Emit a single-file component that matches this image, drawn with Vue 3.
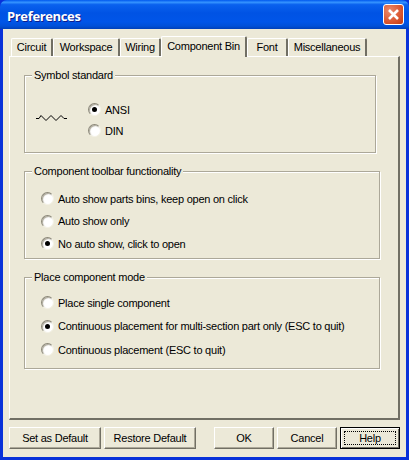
<script setup>
const tabs = [
  { label: 'Circuit', w: 42 },
  { label: 'Workspace', w: 67 },
  { label: 'Wiring', w: 41 },
  { label: 'Component Bin', w: 86, active: true },
  { label: 'Font', w: 41 },
  { label: 'Miscellaneous', w: 79 }
]
const toolbar = [
  { label: 'Auto show parts bins, keep open on click' },
  { label: 'Auto show only' },
  { label: 'No auto show, click to open', on: true }
]
const place = [
  { label: 'Place single component' },
  { label: 'Continuous placement for multi-section part only (ESC to quit)', on: true },
  { label: 'Continuous placement (ESC to quit)' }
]
</script>

<template>
  <div class="window">
    <div class="titlebar">
      <span class="title">Preferences</span>
      <button class="close" aria-label="Close">
        <svg width="21" height="21" viewBox="0 0 21 21">
          <path d="M6 6 L15 15 M15 6 L6 15" stroke="#fff" stroke-width="2.6" fill="none" />
        </svg>
      </button>
    </div>
    <div class="client">
      <div class="tabs">
        <div
          v-for="t in tabs"
          :key="t.label"
          class="tab"
          :class="{ active: t.active }"
          :style="{ width: t.w + 'px' }"
        >{{ t.label }}</div>
      </div>
      <div class="page">
        <section class="group g1">
          <span class="legend">Symbol standard</span>
          <div class="symbol-row">
            <svg class="resistor" width="31" height="8" viewBox="0 0 31 8">
              <path d="M0 5.5H3L5 2.5L10 7.5L15 2.5L20 7.5L25 2.5L28 5.5H31" stroke="#000" stroke-width="1" fill="none" />
            </svg>
            <div class="radios r1">
              <label class="radio on"><i class="dot"></i>ANSI</label>
              <label class="radio"><i class="dot"></i>DIN</label>
            </div>
          </div>
        </section>
        <section class="group g2">
          <span class="legend">Component toolbar functionality</span>
          <div class="radios">
            <label v-for="o in toolbar" :key="o.label" class="radio" :class="{ on: o.on }"><i class="dot"></i>{{ o.label }}</label>
          </div>
        </section>
        <section class="group g2 g3">
          <span class="legend">Place component mode</span>
          <div class="radios">
            <label v-for="o in place" :key="o.label" class="radio" :class="{ on: o.on }"><i class="dot"></i>{{ o.label }}</label>
          </div>
        </section>
      </div>
      <div class="buttons">
        <button class="btn wide">Set as Default</button>
        <button class="btn wide">Restore Default</button>
        <button class="btn push">OK</button>
        <button class="btn">Cancel</button>
        <button class="btn default"><span>Help</span></button>
      </div>
    </div>
  </div>
</template>

<style scoped>
.window {
  width: 409px;
  height: 460px;
  display: flex;
  flex-direction: column;
  background: #0831d9;
  font-family: "Liberation Sans", Arial, sans-serif;
  font-size: 11px;
  letter-spacing: -0.24px;
  color: #000;
  overflow: hidden;
}
.titlebar {
  height: 29px;
  flex: none;
  display: flex;
  align-items: center;
  justify-content: space-between;
  padding: 0 5px 0 7px;
  background: linear-gradient(180deg, #0058ee 0%, #3593ff 8%, #0a61ee 16%, #0053e4 45%, #0055e8 75%, #0050d8 90%, #0040b8 100%);
  border-radius: 7px 7px 0 0;
  box-sizing: border-box;
}
.title {
  color: #fff;
  font-family: "Open Sans", sans-serif;
  font-weight: bold;
  font-size: 13px;
  letter-spacing: -0.35px;
  padding-top: 2px;
  text-shadow: 1px 1px 0 #0f1e8a;
}
.close {
  width: 21px;
  height: 21px;
  padding: 0;
  box-sizing: border-box;
  border: 1px solid #fff;
  border-radius: 3px;
  background: radial-gradient(circle at 30% 30%, #ec8a6c, #da5630 60%, #c0390f);
  display: flex;
}
.close svg { margin: -1px; }
.client {
  flex: 1;
  margin: 0 3px 3px 3px;
  padding: 7px 6px 0 6px;
  background: #ece9d8;
  display: flex;
  flex-direction: column;
}
.tabs {
  display: flex;
  align-items: flex-end;
  height: 20px;
  padding-left: 2px;
  flex: none;
  position: relative;
  z-index: 1;
}
.tab {
  box-sizing: border-box;
  height: 18px;
  line-height: 17px;
  text-align: center;
  background: #ece9d8;
  border-top: 1px solid #fff;
  border-left: 1px solid #fff;
  border-right: 2px solid #716f64;
  border-radius: 2px 2px 0 0;
  white-space: nowrap;
}
.tab.active {
  height: 21px;
  margin-bottom: -1px;
  line-height: 18px;
}
.page {
  box-sizing: border-box;
  height: 364px;
  flex: none;
  padding: 18px 19px 0 14px;
  border-top: 1px solid #fff;
  border-left: 1px solid #fff;
  border-right: 2px solid #716f64;
  border-bottom: 2px solid #716f64;
}
.group {
  position: relative;
  box-sizing: border-box;
  border: 1px solid #aca899;
  box-shadow: 1px 1px 0 #fff, inset 1px 1px 0 #fff;
}
.g1 { width: 352px; height: 78px; }
.g2 { width: 356px; height: 88px; margin-top: 18px; padding: 20px 0 0 16px; }
.g3 { height: 92px; padding-top: 18px; }
.g3 .radios { gap: 10.5px; }
.legend {
  position: absolute;
  top: -8px;
  left: 7px;
  padding: 0 2px;
  line-height: 14px;
  background: #ece9d8;
}
.symbol-row {
  display: flex;
  align-items: flex-start;
  padding: 27px 0 0 11px;
}
.resistor { flex: none; margin-top: 10px; }
.radios {
  display: flex;
  flex-direction: column;
  gap: 9.5px;
}
.radios.r1 { margin-left: 21px; gap: 8px; }
.radio {
  display: flex;
  align-items: center;
  gap: 4px;
  height: 13px;
  white-space: nowrap;
}
.dot {
  box-sizing: border-box;
  width: 13px;
  height: 13px;
  flex: none;
  border-radius: 50%;
  background: #fff;
  border: 1px solid;
  border-color: #8a8778 #f4f2e6 #f4f2e6 #8a8778;
  box-shadow: inset 1px 1px 1px #aca899;
  position: relative;
}
.on .dot::after {
  content: "";
  position: absolute;
  left: 3px;
  top: 3px;
  width: 5px;
  height: 5px;
  border-radius: 50%;
  background: #000;
}
.buttons {
  display: flex;
  gap: 3px;
  margin-top: 7px;
  flex: none;
}
.btn {
  box-sizing: border-box;
  width: 60px;
  height: 22px;
  padding: 0;
  font: inherit;
  letter-spacing: inherit;
  color: #000;
  background: #ece9d8;
  border: 1px solid;
  border-color: #fff #716f64 #716f64 #fff;
  box-shadow: inset -1px -1px 0 #aca899;
}
.btn.wide { width: 92px; }
.btn.push { margin-left: 15px; }
.btn.default {
  border: 1px solid #000;
  box-shadow: inset 1px 1px 0 #fff, inset -1px -1px 0 #716f64;
  padding: 3px;
}
.btn.default span {
  display: block;
  height: 100%;
  line-height: 12px;
  border: 1px dotted #000;
  box-sizing: border-box;
}
</style>
